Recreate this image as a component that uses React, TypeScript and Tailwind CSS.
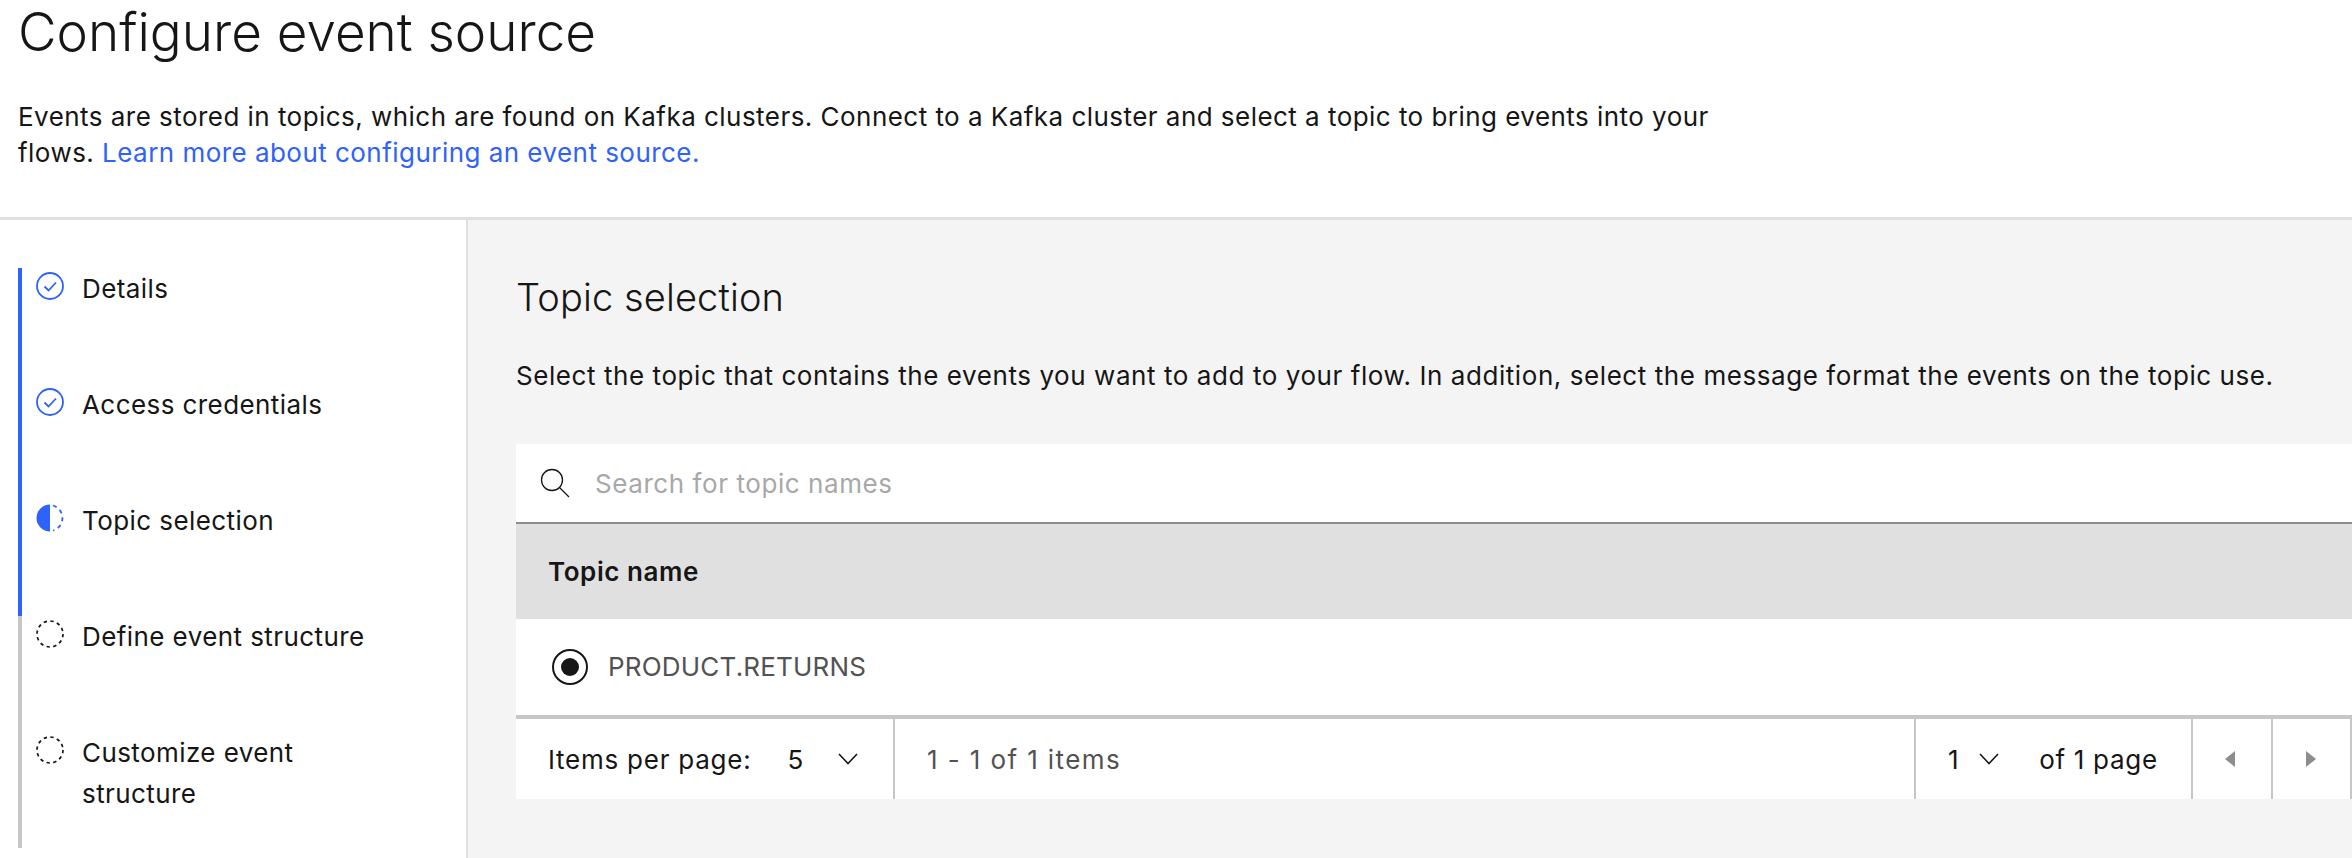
import React from "react";

function Check() {
  return (
    <svg width="28" height="28" viewBox="0 0 28 28" fill="none" className="shrink-0">
      <circle cx="14" cy="14" r="13" stroke="#2f62fb" strokeWidth="1.8" />
      <path d="M8.5 14.5 12.5 18.5 20 10.5" stroke="#2f62fb" strokeWidth="1.8" />
    </svg>
  );
}
function Half() {
  return (
    <svg width="28" height="28" viewBox="0 0 28 28" fill="none" className="shrink-0">
      <path d="M14 0.5A13.5 13.5 0 0 0 14 27.5Z" fill="#2f62fb" />
      <path d="M17 1.5A13 13 0 0 1 17 26.5" stroke="#2f62fb" strokeWidth="1.8" strokeDasharray="4 4" />
    </svg>
  );
}
function Dash() {
  return (
    <svg width="28" height="28" viewBox="0 0 28 28" fill="none" className="shrink-0">
      <circle cx="14" cy="14" r="13" stroke="#161616" strokeWidth="1.7" strokeDasharray="3.4 3.4" />
    </svg>
  );
}
function Chevron() {
  return (
    <svg width="20" height="12" viewBox="0 0 20 12" fill="none" className="shrink-0">
      <path d="M1 1 10 10.5 19 1" stroke="#161616" strokeWidth="1.6" />
    </svg>
  );
}

function Step({ icon, active, children }: { icon: React.ReactNode; active: boolean; children: React.ReactNode }) {
  return (
    <li className={`flex h-[116px] gap-[18px] border-l-4 pl-[14px] pt-[4px] ${active ? "border-[#2f62fb]" : "border-[#c6c6c6]"}`}>
      {icon}
      <span className="w-[320px] -mt-[4px] text-[26px] leading-[41px] tracking-[0.42px] text-[#161616]">{children}</span>
    </li>
  );
}

export default function App() {
  return (
    <div className="flex h-[858px] w-[2352px] flex-col overflow-hidden bg-white font-['Inter','Liberation_Sans',sans-serif] text-[#161616]">
      <header className="h-[220px] shrink-0 border-b-[3px] border-[#e0e0e0] pl-[18px]">
        <h1 className="text-[53px] leading-[64px] font-light">Configure event source</h1>
        <p className="mt-[35px] w-[1720px] text-[26px] leading-[36px] tracking-[0.46px]">
          Events are stored in topics, which are found on Kafka clusters. Connect to a Kafka cluster and select a topic to bring events into your flows.{" "}
          <a className="text-[#2f62fb]">Learn more about configuring an event source.</a>
        </p>
      </header>
      <div className="flex min-h-0 flex-1">
        <aside className="w-[468px] shrink-0 border-r-[2px] border-[#e0e0e0] pl-[18px] pt-[48px]">
          <ol>
            <Step icon={<Check />} active>Details</Step>
            <Step icon={<Check />} active>Access credentials</Step>
            <Step icon={<Half />} active>Topic selection</Step>
            <Step icon={<Dash />} active={false}>Define event structure</Step>
            <Step icon={<Dash />} active={false}>Customize event structure</Step>
          </ol>
        </aside>
        <main className="min-w-0 flex-1 bg-[#f4f4f4] pl-[48px] pt-[53px] text-[26px] tracking-[0.57px]">
          <h2 className="text-[38px] leading-[48px] font-light tracking-[0.12px]">Topic selection</h2>
          <p className="mt-[37px] leading-[36px] whitespace-nowrap">
            Select the topic that contains the events you want to add to your flow. In addition, select the message format the events on the topic use.
          </p>
          <section className="mt-[50px]">
            <div className="flex h-[80px] items-center border-b-2 border-[#8d8d8d] bg-white pl-[24px]">
              <svg width="30" height="30" viewBox="0 0 30 30" fill="none" className="shrink-0">
                <circle cx="12" cy="12" r="10.5" stroke="#161616" strokeWidth="1.3" />
                <path d="M19.5 19.5 29 29" stroke="#161616" strokeWidth="1.3" />
              </svg>
              <span className="ml-[25px] text-[#a8a8a8]">Search for topic names</span>
            </div>
            <div className="flex h-[95px] items-center bg-[#e0e0e0] pl-[32px] font-semibold">Topic name</div>
            <div className="flex h-[100px] items-center border-b-4 border-[#c6c6c6] bg-white pl-[36px]">
              <span className="flex h-[36px] w-[36px] items-center justify-center rounded-full border-2 border-[#161616]">
                <span className="h-[18px] w-[18px] rounded-full bg-[#161616]" />
              </span>
              <span className="ml-[20px] -mt-[2px] tracking-[0.2px] text-[#525252]">PRODUCT.RETURNS</span>
            </div>
            <div className="flex h-[80px] items-center bg-white">
              <div className="flex h-full w-[379px] shrink-0 items-center border-r-2 border-[#c6c6c6] pl-[32px]">
                <span className="tracking-[0.75px]">Items per page:</span>
                <span className="ml-[36px]">5</span>
                <span className="ml-[34px]"><Chevron /></span>
              </div>
              <div className="flex-1 pl-[32px] tracking-[1.4px] text-[#525252]">1 - 1 of 1 items</div>
              <div className="flex h-full w-[277px] shrink-0 items-center border-l-2 border-[#c6c6c6] pl-[32px]">
                <span>1</span>
                <span className="ml-[20px]"><Chevron /></span>
                <span className="ml-[40px] tracking-[0.7px]">of 1 page</span>
              </div>
              <div className="flex h-full w-[80px] shrink-0 items-center justify-center border-l-2 border-[#c6c6c6] pr-[4px]">
                <svg width="10" height="16" viewBox="0 0 10 16"><path d="M10 0V16L0 8Z" fill="#8d8d8d" /></svg>
              </div>
              <div className="flex h-full w-[81px] shrink-0 items-center justify-center border-x-2 border-[#c6c6c6] pr-[1px]">
                <svg width="10" height="16" viewBox="0 0 10 16"><path d="M0 0V16L10 8Z" fill="#8d8d8d" /></svg>
              </div>
            </div>
          </section>
        </main>
      </div>
    </div>
  );
}
